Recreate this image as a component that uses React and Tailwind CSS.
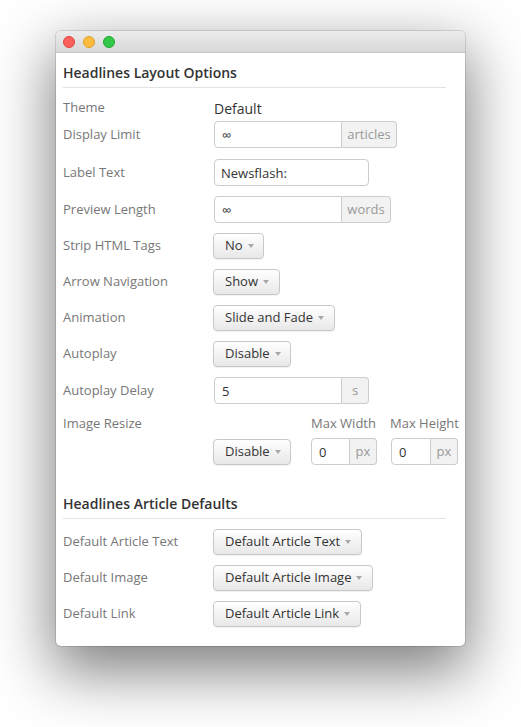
import React from "react";

const Caret = () => (
  <span className="ml-[5px] inline-block w-0 h-0 border-t-[4px] border-t-[#a8a8a8] border-x-[3.5px] border-x-transparent" />
);

const DropButton = ({ label, width }) => (
  <button
    type="button"
    className={`${width} h-[26px] flex items-center pl-[11px] rounded-[4px] border border-[#c8c8c8] bg-gradient-to-b from-white to-[#e8e8e8] text-[13px] text-[#333] shadow-[0_1px_1px_rgba(0,0,0,0.06)]`}
  >
    {label}
    <Caret />
  </button>
);

const InputGroup = ({ value, inputWidth, addon, addonWidth }) => (
  <div className="flex h-[27px]">
    <input
      readOnly
      value={value}
      className={`${inputWidth} h-full px-[7px] border border-[#ccc] rounded-l-[4px] text-[13px] text-[#333] outline-none bg-white`}
    />
    <span
      className={`${addonWidth} h-full flex items-center justify-center border border-l-0 border-[#ccc] rounded-r-[4px] bg-[#f2f2f2] text-[13px] text-[#999]`}
    >
      {addon}
    </span>
  </div>
);

const Row = ({ label, mt, children }) => (
  <div className={`flex items-center ${mt}`}>
    <div className="w-[150px] text-[13px] text-[#777]">{label}</div>
    {children}
  </div>
);

const Heading = ({ children, mt }) => (
  <h3 className={`${mt} mr-[19px] pb-[4px] border-b border-[#e3e3e3] text-[14px] leading-[20px] font-semibold text-[#333]`}>
    {children}
  </h3>
);

export default function App() {
  return (
    <div className="min-h-[727px] bg-white pt-[31px] pl-[56px] font-['Open_Sans',sans-serif]">
      <div className="w-[409px] rounded-[5px] bg-white shadow-[0_22px_60px_4px_rgba(0,0,0,0.5),0_0_0_1px_rgba(0,0,0,0.12)]">
        <div className="h-[22px] flex items-center gap-[8px] pl-[7px] rounded-t-[5px] bg-gradient-to-b from-[#ececec] to-[#d8d8d8] border-b border-[#c6c6c6]">
          <span className="w-[12px] h-[12px] rounded-full bg-[#fc605c] border border-[#e0443e]" />
          <span className="w-[12px] h-[12px] rounded-full bg-[#fdbc40] border border-[#dea123]" />
          <span className="w-[12px] h-[12px] rounded-full bg-[#34c84a] border border-[#1aab29]" />
        </div>

        <div className="pt-[10px] pl-[7px] pb-[19px]">
          <Heading mt="mt-0">Headlines Layout Options</Heading>

          <Row label="Theme" mt="mt-[10px] h-[20px]">
            <span className="pl-px text-[14px] text-[#333]">Default</span>
          </Row>
          <Row label="Display Limit" mt="mt-[3px]">
            <div className="pl-px">
              <InputGroup value="∞" inputWidth="w-[128px]" addon="articles" addonWidth="w-[55px]" />
            </div>
          </Row>
          <Row label="Label Text" mt="mt-[11px]">
            <div className="pl-px">
              <input
                readOnly
                value="Newsflash:"
                className="w-[155px] h-[27px] px-[6px] border border-[#ccc] rounded-[4px] text-[13px] text-[#333] outline-none"
              />
            </div>
          </Row>
          <Row label="Preview Length" mt="mt-[10px]">
            <div className="pl-px">
              <InputGroup value="∞" inputWidth="w-[128px]" addon="words" addonWidth="w-[49px]" />
            </div>
          </Row>
          <Row label="Strip HTML Tags" mt="mt-[10px]">
            <DropButton label="No" width="w-[51px]" />
          </Row>
          <Row label="Arrow Navigation" mt="mt-[10px]">
            <DropButton label="Show" width="w-[67px]" />
          </Row>
          <Row label="Animation" mt="mt-[10px]">
            <DropButton label="Slide and Fade" width="w-[122px]" />
          </Row>
          <Row label="Autoplay" mt="mt-[10px]">
            <DropButton label="Disable" width="w-[78px]" />
          </Row>
          <Row label="Autoplay Delay" mt="mt-[10px]">
            <div className="pl-px">
              <InputGroup value="5" inputWidth="w-[128px]" addon="s" addonWidth="w-[27px]" />
            </div>
          </Row>

          <div className="flex mt-[11px]">
            <div className="w-[150px] h-[18px] flex items-center text-[13px] text-[#777]">Image Resize</div>
            <div className="flex items-end">
              <DropButton label="Disable" width="w-[78px]" />
              <div className="ml-[20px] flex flex-col">
                <span className="h-[18px] flex items-center text-[13px] text-[#777]">Max Width</span>
                <div className="mt-[5px]">
                  <InputGroup value="0" inputWidth="w-[39px]" addon="px" addonWidth="w-[27px]" />
                </div>
              </div>
              <div className="ml-[14px] flex flex-col">
                <span className="h-[18px] flex items-center text-[13px] text-[#777] -ml-px">Max Height</span>
                <div className="mt-[5px]">
                  <InputGroup value="0" inputWidth="w-[40px]" addon="px" addonWidth="w-[27px]" />
                </div>
              </div>
            </div>
          </div>

          <Heading mt="mt-[29px]">Headlines Article Defaults</Heading>

          <Row label="Default Article Text" mt="mt-[10px]">
            <DropButton label="Default Article Text" width="w-[149px]" />
          </Row>
          <Row label="Default Image" mt="mt-[10px]">
            <DropButton label="Default Article Image" width="w-[160px]" />
          </Row>
          <Row label="Default Link" mt="mt-[10px]">
            <DropButton label="Default Article Link" width="w-[148px]" />
          </Row>
        </div>
      </div>
    </div>
  );
}
